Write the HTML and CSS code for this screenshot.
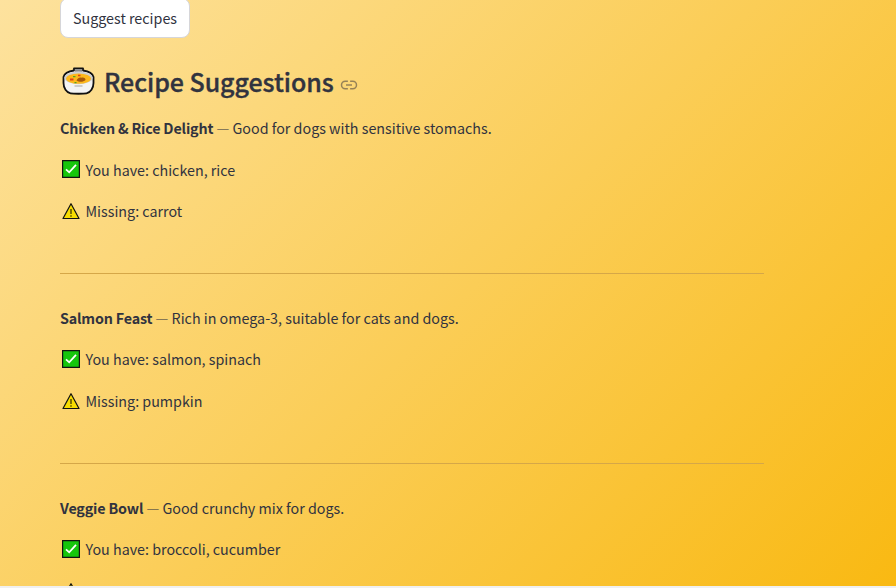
FILE: index.html
```
<!DOCTYPE html>
<html lang="en">
<head>
<meta charset="utf-8">
<title>Recipe Suggestions</title>
<link rel="stylesheet" href="styles.css">
</head>
<body>
<svg width="0" height="0" class="defs">
  <symbol id="check" viewBox="0 0 18 18"><path d="M.6.6h16.800v16.800H.6z" fill="#16c60c" stroke="#111" stroke-width="1.200"/><path d="m4 9.300 3.200 3 6.800-7.400" fill="none" stroke="#fff" stroke-width="1.800"/></symbol>
  <symbol id="warn" viewBox="0 0 18 18"><path d="M9 1.700 17 16.500H1z" fill="#f8dc00" stroke="#111" stroke-width="1.200" stroke-linejoin="round"/><path d="M9 7v5M9 13.200v1.600" stroke="#6b6000" stroke-width="1.700"/></symbol>
</svg>
<main class="page">
  <button class="suggest"><span>Suggest recipes</span></button>
  <h2 class="title">
    <svg class="bowl" viewBox="0 0 32 28">
      <path d="M11.500 1.300h9v2.200c5 .7 9.500 2.500 10.500 6.500v6c0 5-3 9.500-7 10.300-3 .6-13 .6-16 0C4 25.500 1 21 1 16v-6c1-4 5.500-5.800 10.500-6.500z" fill="#f4f4f4" stroke="#111" stroke-width="1.800" stroke-linejoin="round"/>
      <path d="M12.400 2.200h7.200v2.600h-7.200z" fill="#888"/>
      <ellipse cx="16" cy="10.800" rx="14" ry="6.400" fill="#cfcfcf"/>
      <ellipse cx="16" cy="11.600" rx="12.500" ry="5.200" fill="#fdb81b"/>
      <path d="M14 13.500c1-3 4-3.500 5-2.800 3-.5 4 1 4 2.300-2 2-6 2.500-9 .5z" fill="#a5580d"/>
      <path d="M7.500 11.500h3.500v2H7.500zM15.500 7.800h2.500v1.500h-2.500z" fill="#e0401b"/>
      <path d="M10.500 9h2.500v1.200h-2.500zM12 15h2v1.300h-2z" fill="#57a51b"/>
      <path d="M12 18h8v2h-8z" fill="#ccc"/>
    </svg>
    <span class="heading">Recipe Suggestions</span>
    <svg class="link" viewBox="0 0 24 24" fill="none" stroke="currentColor" stroke-width="2"><path d="M10.500 7H7a5 5 0 0 0 0 10h3.500M13.500 7H17a5 5 0 0 1 0 10h-3.500M8 12h8"/></svg>
  </h2>
  <section class="recipe">
    <p><strong>Chicken &amp; Rice Delight</strong><i class="dash">—</i><span>Good for dogs with sensitive stomachs.</span></p>
    <p><svg class="emoji"><use href="#check"/></svg><span>You have: chicken, rice</span></p>
    <p><svg class="emoji"><use href="#warn"/></svg><span>Missing: carrot</span></p>
  </section>
  <hr>
  <section class="recipe">
    <p><strong>Salmon Feast</strong><i class="dash">—</i><span>Rich in omega-3, suitable for cats and dogs.</span></p>
    <p><svg class="emoji"><use href="#check"/></svg><span>You have: salmon, spinach</span></p>
    <p><svg class="emoji"><use href="#warn"/></svg><span>Missing: pumpkin</span></p>
  </section>
  <hr>
  <section class="recipe">
    <p><strong>Veggie Bowl</strong><i class="dash">—</i><span>Good crunchy mix for dogs.</span></p>
    <p><svg class="emoji"><use href="#check"/></svg><span>You have: broccoli, cucumber</span></p>
    <p><svg class="emoji"><use href="#warn"/></svg></p>
  </section>
</main>
<footer class="edge"></footer>
</body>
</html>
```
FILE: styles.css
```
* { box-sizing: border-box; }
body {
  margin: 0;
  height: 588px;
  overflow: hidden;
  display: flex;
  flex-direction: column;
  background: #f0f0f0;
  color: #31333f;
  font: 14.3px/25.6px "Noto Sans CJK SC", "Noto Sans", sans-serif;
}
.defs { position: absolute; }
.page {
  height: 586px;
  overflow: hidden;
  padding-left: 60px;
  background: linear-gradient(135deg, #fde29e 0%, #f9b912 100%);
}
.suggest {
  display: flex;
  align-items: center;
  justify-content: center;
  width: 130px;
  height: 40px;
  margin-top: -2px;
  padding: 0;
  border: 1px solid #d6d6d9;
  border-radius: 8px;
  background: #fff;
  color: inherit;
  font: inherit;
}
.title {
  display: flex;
  align-items: center;
  height: 34px;
  margin: 26px 0 17px;
  font-size: 25px;
  line-height: 34px;
  font-weight: 500;
}
.heading { letter-spacing: -.06px; -webkit-text-stroke: .35px currentColor; }
.bowl { width: 33px; height: 28px; margin: 0 9px 0 2px; }
.link { width: 18px; height: 18px; margin: 8px 0 0 6px; color: #978257; }
.recipe { display: flex; flex-direction: column; gap: 16px; }
.recipe p { display: flex; align-items: center; height: 25.6px; margin: 0; white-space: nowrap; }
strong { font-weight: 700; letter-spacing: -.17px; }
.dash { width: 19.200px; text-align: center; font-style: normal; opacity: .7; }
.emoji { width: 18px; height: 18px; margin: 0 5.500px 0 2px; }
hr { width: 704px; height: 1px; margin: 49px 0 31px; border: 0; background: #d5a748; }
.edge { height: 2px; }
```
